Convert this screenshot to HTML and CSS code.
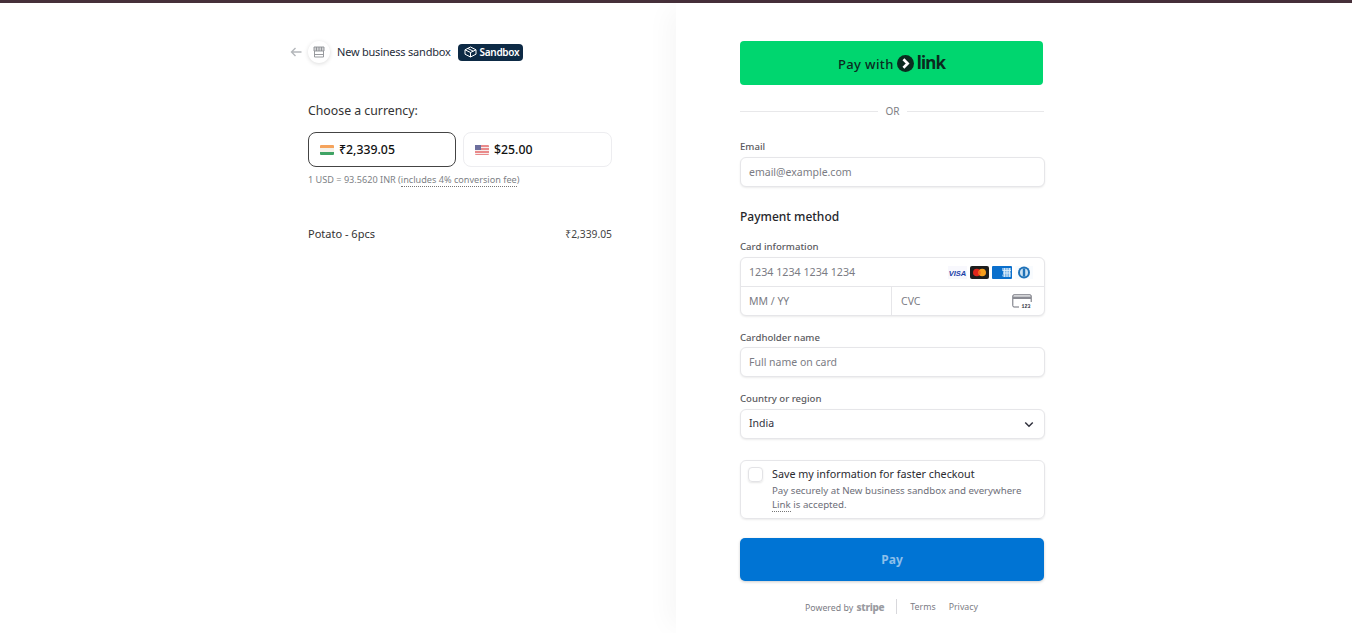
FILE: index.html
```html
<!DOCTYPE html>
<html lang="en">
<head>
<meta charset="utf-8">
<title>Checkout</title>
<link rel="stylesheet" href="styles.css">
</head>
<body>
<div class="topbar"></div>
<main class="page">
  <section class="overview">
    <div class="overview-inner">
      <header class="merchant">
        <svg class="back" width="12" height="10" viewBox="0 0 12 10"><path d="M5.500 1 1.500 5l4 4M1.500 5H11.500" fill="none" stroke="#b4b7bb" stroke-width="1.400"/></svg>
        <span class="logo-circle">
          <svg width="12" height="12" viewBox="0 0 12 12"><path d="M1 1h10v4H1z" fill="#d3d4d6"/><path d="M1 1h10v4H1zM3.500 1v4M6 1v4M8.500 1v4M1.500 5v6h9V5M1.500 8.500h9" fill="none" stroke="#8d9094" stroke-width=".9"/></svg>
        </span>
        <span class="merchant-name">New business sandbox</span>
        <span class="sandbox-tag">
          <svg width="13" height="12" viewBox="0 0 13 12"><path d="M6.500 1 12 3.800v4.400L6.500 11 1 8.200V3.800zM1 3.800l5.500 2.700L12 3.800M6.500 6.500V11M3.700 2.400l5.600 2.800" fill="none" stroke="#fff" stroke-width="1"/></svg>
          Sandbox
        </span>
      </header>
      <div class="currency">
        <h2 class="currency-title">Choose a currency:</h2>
        <div class="currency-options">
          <div class="currency-option selected">
            <span class="flag flag-in"></span><span>₹2,339.05</span>
          </div>
          <div class="currency-option">
            <span class="flag flag-us"></span><span>$25.00</span>
          </div>
        </div>
        <p class="rate">1 USD = 93.5620 INR (<span class="dotted">includes 4% conversion fee</span>)</p>
      </div>
      <div class="line-item">
        <span>Potato - 6pcs</span>
        <span class="line-price">₹2,339.05</span>
      </div>
    </div>
  </section>
  <section class="payment">
    <div class="payment-inner">
      <button class="link-btn" type="button">
        <span class="pay-with">Pay with</span>
        <svg class="link-mark" width="17" height="17" viewBox="0 0 18 18"><circle cx="9" cy="9" r="9" fill="#0b2a1f"/><path d="M6.800 4.500 11.300 9l-4.500 4.500" fill="none" stroke="#fff" stroke-width="2.800"/></svg>
        <span class="link-word">link</span>
      </button>
      <div class="divider"><span class="divider-text">OR</span></div>
      <label class="field-label label-email">Email</label>
      <div class="input">email@example.com</div>
      <h2 class="method-title">Payment method</h2>
      <label class="field-label label-card">Card information</label>
      <div class="card-box">
        <div class="card-row">
          <span>1234 1234 1234 1234</span>
          <span class="brands">
            <svg width="19" height="13" viewBox="0 0 19 13"><rect width="19" height="13" fill="#f8f8fd"/><text x="9.500" y="9.500" class="visa-text" text-anchor="middle">VISA</text></svg>
            <svg width="19" height="13" viewBox="0 0 19 13"><rect width="19" height="13" rx="2" fill="#1d1d1d"/><circle cx="6.800" cy="6.500" r="3.800" fill="#e0261c"/><circle cx="12.200" cy="6.500" r="3.800" fill="#f79e1b"/><path d="M9.500 3.900a3.800 3.800 0 0 1 0 5.200 3.800 3.800 0 0 1 0-5.200z" fill="#f4661e"/></svg>
            <svg width="20" height="13" viewBox="0 0 20 13"><rect width="20" height="13" rx="1" fill="#0a6fcc"/><path d="M10 2h9v3l-1 1.500 1 1.500v3h-8l-1-1.500L11 8V5.500L10 4z" fill="#7db6e8"/><path d="M12.500 2v9M15 2v9M17.500 2v9M10.500 4.500H19M11 7h8" stroke="#e4f0fa" stroke-width=".8"/></svg>
            <svg width="18" height="13" viewBox="0 0 18 13"><rect width="18" height="13" fill="#f8fbfe"/><circle cx="9" cy="6.500" r="6" fill="#1f72b8"/><circle cx="9" cy="6.500" r="4" fill="#cfe3f3"/><rect x="7.800" y="2.500" width="2.400" height="8" fill="#1f72b8"/></svg>
          </span>
        </div>
        <div class="card-split">
          <div class="card-cell card-exp">MM / YY</div>
          <div class="card-cell card-cvc">
            <span>CVC</span>
            <svg width="20" height="14" viewBox="0 0 20 14"><path d="M7 13H2a1.200 1.200 0 0 1-1.200-1.200V2A1.200 1.200 0 0 1 2 .800h16A1.200 1.200 0 0 1 19.200 2v6" fill="none" stroke="#6d6e78" stroke-width="1"/><rect x="1" y="2.500" width="18" height="2.500" fill="#8a8b93"/><text x="14" y="13.500" class="cvc-text" text-anchor="middle">123</text></svg>
          </div>
        </div>
      </div>
      <label class="field-label label-gap label-name">Cardholder name</label>
      <div class="input">Full name on card</div>
      <label class="field-label label-gap">Country or region</label>
      <div class="input input-select">
        <span class="select-value">India</span>
        <svg width="10" height="7" viewBox="0 0 12 8"><path d="M1.500 1.500 6 6l4.500-4.500" fill="none" stroke="#30313d" stroke-width="1.800"/></svg>
      </div>
      <div class="save-box">
        <span class="checkbox"></span>
        <div class="save-copy">
          <div class="save-title">Save my information for faster checkout</div>
          <div class="save-desc">Pay securely at New business sandbox and everywhere <span class="dotted">Link</span> is accepted.</div>
        </div>
      </div>
      <button class="pay-btn" type="button">Pay</button>
      <footer class="foot">
        <span class="powered">Powered by <b class="stripe">stripe</b></span>
        <span class="foot-sep"></span>
        <span class="foot-links"><span>Terms</span><span>Privacy</span></span>
      </footer>
    </div>
  </section>
</main>
</body>
</html>
```
FILE: styles.css
```css
* { box-sizing: border-box; }
html, body { margin: 0; height: 100%; overflow: hidden; }
body {
  font-family: "Noto Sans", "Open Sans", sans-serif;
  color: #1a1a1a;
  background: #fff;
  display: flex;
  flex-direction: column;
}
.topbar { height: 3px; background: #46303a; flex: none; }
.page { flex: 1; display: flex; min-height: 0; }

.overview { width: 676px; flex: none; padding: 38px 0 0 290px; }
.overview-inner { width: 322px; }
.merchant { display: flex; align-items: center; height: 22px; }
.back { margin-right: 6px; }
.logo-circle {
  width: 22px; height: 22px; border-radius: 50%;
  background: #fff; box-shadow: 0 1px 4px rgba(0,0,0,.14);
  display: flex; align-items: center; justify-content: center;
  margin-right: 7px;
}
.merchant-name { font-size: 11px; color: #1f2d3a; margin: 0 7px 2px 0; letter-spacing: -.02em; }
.sandbox-tag {
  display: inline-flex; align-items: center; gap: 3px;
  height: 17px; padding: 0 4px 0 6px;
  background: #0d2a45; color: #fff; border-radius: 4px;
  font-size: 10px; font-weight: 600; letter-spacing: -.03em;
}
.currency { padding-left: 18px; margin-top: 39px; }
.currency-title { margin: 0; font-size: 12.300px; font-weight: 400; line-height: 18px; color: #333; }
.currency-options { display: flex; gap: 7px; margin-top: 12px; }
.currency-option {
  flex: 1; height: 35px; display: flex; align-items: center; gap: 5px;
  padding-left: 11px; border: 1px solid #ededf0; border-radius: 8px;
  font-size: 12.300px; font-weight: 500; color: #111;
}
.currency-option.selected { flex: 0 0 148px; border-color: #444; }
.flag { width: 14px; height: 10px; border-radius: 1px; flex: none; }
.flag-in { background: linear-gradient(#f5a35c 0 33%, #f4f1ea 33% 66%, #3fa364 66%); }
.flag-us { background: repeating-linear-gradient(#e98a8a 0 1.500px, #f7ecec 1.500px 3px); position: relative; }
.flag-us::before { content: ""; position: absolute; left: 0; top: 0; width: 6px; height: 5px; background: #6d6f9d; }
.rate { margin: 6px 0 0; font-size: 9.130px; line-height: 13px; color: #7d7f85; }
.dotted { border-bottom: 1px dotted #777; }
.line-item {
  margin: 40px 0 0 18px; display: flex; justify-content: space-between;
  font-size: 11px; line-height: 16px; color: #333;
}
.line-price { color: #444; font-size: 10.300px; }

.payment { flex: 1; padding: 38px 0 0 64px; box-shadow: -14px 0 24px -6px rgba(0,0,0,.035); }
.payment-inner { width: 305px; display: flex; flex-direction: column; }
.link-btn {
  width: 303px; height: 44px; border: 0; border-radius: 4px; background: #00d66f;
  display: flex; align-items: center; justify-content: center; gap: 4px;
  font-family: inherit; font-size: 13px; color: #0b2a1f; padding: 0;
}
.pay-with { font-weight: 500; letter-spacing: .03em; margin-top: 2px; }
.link-mark { margin-left: -1px; }
.link-word { font-size: 17px; font-weight: 700; letter-spacing: -.05em; line-height: 18px; margin-left: -1px; }
.divider { position: relative; height: 20px; margin-top: 16px; display: flex; align-items: center; justify-content: center; }
.divider::before { content: ""; position: absolute; left: 0; right: 1px; top: 10px; height: 1px; background: #e8e8ea; }
.divider-text { position: relative; background: #fff; padding: 0 7px; font-size: 10px; color: #7d7f85; line-height: 20px; }
.field-label { display: block; font-size: 9.600px; font-weight: 500; line-height: 14px; color: #5a5a60; margin-bottom: 3px; }
.label-email { margin-top: 19px; }
.label-card { margin-top: 14px; }
.label-gap { margin-top: 15px; }
.label-name { margin-bottom: 2px; }
.input {
  height: 30px; border-radius: 6px; background: #fff; padding: 0 8px;
  border: 1px solid #e6e6e9; box-shadow: 0 1px 2px rgba(0,0,0,.08);
  display: flex; align-items: center; font-size: 10.500px; color: #7b7c84;
}
.method-title { margin: 21px 0 0; font-size: 12px; font-weight: 500; line-height: 18px; color: #26262b; }
.card-box { border-radius: 6px; border: 1px solid #e6e6e9; box-shadow: 0 1px 2px rgba(0,0,0,.08); background: #fff; height: 59px; }
.card-row { height: 29px; display: flex; align-items: center; justify-content: space-between; padding: 0 8px 0 9px; font-size: 10.700px; color: #7b7c84; border-bottom: 1px solid #e6e6e9; }
.card-row > span:first-child { margin-left: -1px; }
.brands { display: flex; align-items: center; gap: 3px; margin-right: 3px; }
.visa-text { font: italic 700 7.500px "Liberation Sans", sans-serif; fill: #1a3fa8; }
.cvc-text { font: 700 5px "Liberation Mono", monospace; fill: #30313d; }
.card-split { display: flex; height: 28px; }
.card-cell { display: flex; align-items: center; padding: 0 8px; font-size: 10.500px; color: #7b7c84; }
.card-exp { flex: 0 0 150px; }
.card-cvc { flex: 1; justify-content: space-between; border-left: 1px solid #e6e6e9; padding: 0 12px 0 9px; }
.input-select { color: #30313d; justify-content: space-between; padding-right: 10px; }
.select-value { margin-bottom: 2px; }
.save-box {
  margin-top: 21px; height: 59px; border-radius: 6px;
  border: 1px solid #e6e6e9; box-shadow: 0 1px 2px rgba(0,0,0,.08);
  display: flex; gap: 9px; padding: 6px 7px;
}
.checkbox { width: 15px; height: 15px; flex: none; border-radius: 4px; border: 1px solid #e3e3e6; box-shadow: 0 1px 2px rgba(0,0,0,.1); }
.save-copy { min-width: 0; max-width: 256px; }
.save-title { font-size: 10.750px; line-height: 14px; color: #2a2a30; }
.save-desc { margin-top: 3px; font-size: 9.700px; line-height: 14px; color: #6d6e78; }
.pay-btn {
  margin-top: 19px; height: 43px; width: 304px; border: 0; border-radius: 5px;
  background: #0074d4; color: #8ebfea; font-family: inherit; font-size: 12px; font-weight: 700;
  box-shadow: 0 1px 3px rgba(0,0,0,.2);
}
.foot { margin-top: 18px; display: flex; align-items: center; justify-content: center; font-size: 8.800px; color: #7b7c84; height: 15px; width: 303px; }
.stripe { font-size: 10px; font-weight: 800; color: #9a9ba1; letter-spacing: -.03em; margin-left: 1px; }
.foot-sep { width: 1px; height: 15px; background: #d8d8dc; margin: 0 13px 0 12px; }
.foot-links { display: flex; gap: 13px; }
```
